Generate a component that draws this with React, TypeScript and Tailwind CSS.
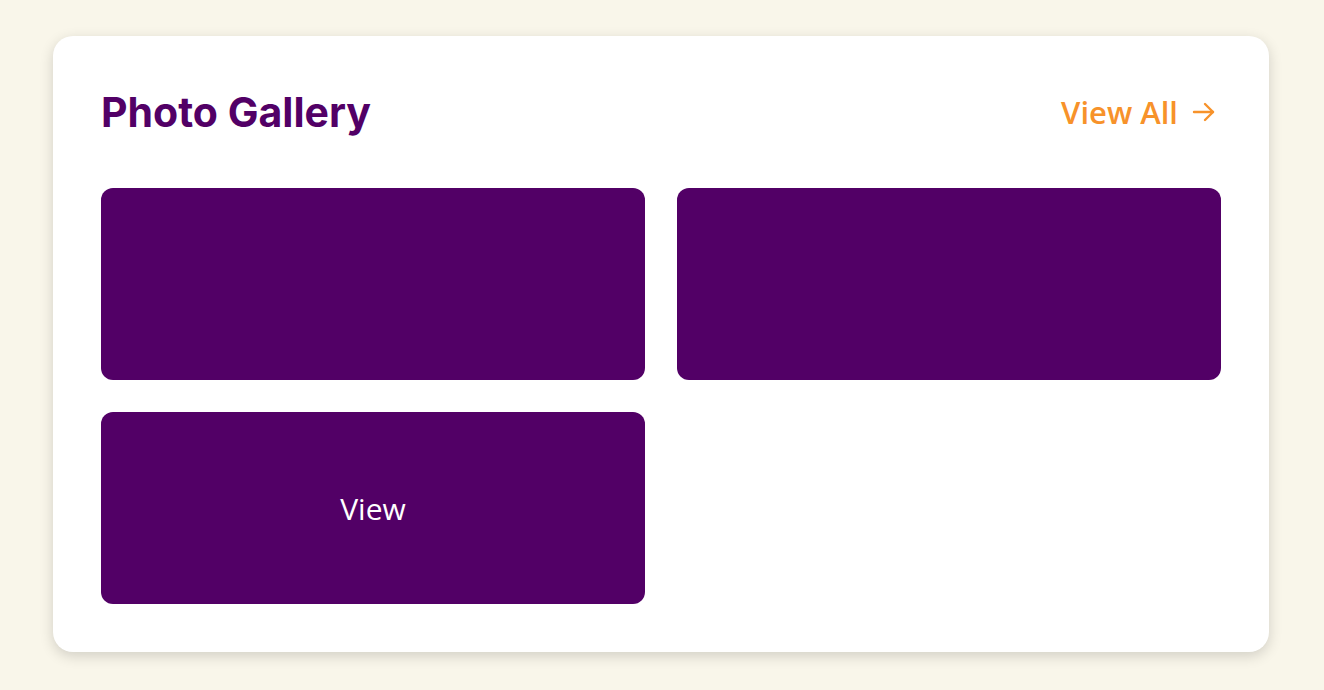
import React from "react";

export default function App() {
  return (
    <div className="min-h-[690px] w-full bg-[#f9f6ea] pt-9">
      <div className="ml-[53px] w-[1216px] rounded-[20px] bg-white p-12 shadow-[0_4px_14px_rgba(0,0,0,0.16)]">
        <div className="mb-12 flex h-14 items-center justify-between">
          <h2 className="text-[41px] font-bold leading-none tracking-[0px] text-[#520066] [font-family:Inter,sans-serif]">
            Photo Gallery
          </h2>
          <a className="mr-[5px] flex items-center gap-[14px] text-[31px] font-semibold text-[#f7922a] [font-family:'Open_Sans',sans-serif]">
            <span>View All</span>
            <svg width="24" height="24" viewBox="0 0 24 24" fill="none" stroke="currentColor" strokeWidth="2.4" strokeLinecap="round" strokeLinejoin="round">
              <path d="M2 12h19" />
              <path d="M13 4l8 8-8 8" />
            </svg>
          </a>
        </div>
        <div className="grid grid-cols-2 gap-8">
          <div className="h-[192px] rounded-xl bg-[#520066]" />
          <div className="h-[192px] rounded-xl bg-[#520066]" />
          <div className="flex h-[192px] items-center justify-center rounded-xl bg-[#520066]">
            <span className="text-[30px] text-white [font-family:'Open_Sans',sans-serif]">View</span>
          </div>
        </div>
      </div>
    </div>
  );
}
